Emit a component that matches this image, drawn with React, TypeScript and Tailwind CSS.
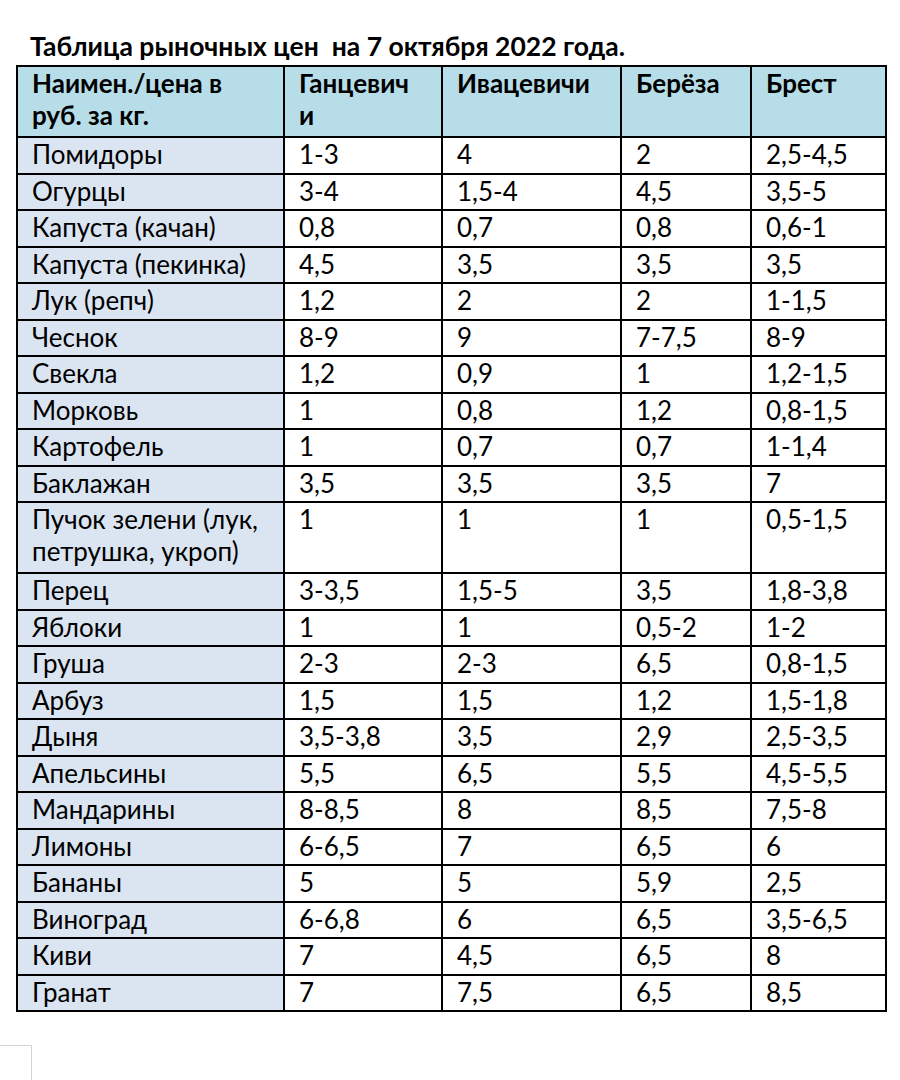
import { Fragment } from "react";

const rows: [string, string, string, string, string][] = [
  ["Помидоры", "1-3", "4", "2", "2,5-4,5"],
  ["Огурцы", "3-4", "1,5-4", "4,5", "3,5-5"],
  ["Капуста (качан)", "0,8", "0,7", "0,8", "0,6-1"],
  ["Капуста (пекинка)", "4,5", "3,5", "3,5", "3,5"],
  ["Лук (репч)", "1,2", "2", "2", "1-1,5"],
  ["Чеснок", "8-9", "9", "7-7,5", "8-9"],
  ["Свекла", "1,2", "0,9", "1", "1,2-1,5"],
  ["Морковь", "1", "0,8", "1,2", "0,8-1,5"],
  ["Картофель", "1", "0,7", "0,7", "1-1,4"],
  ["Баклажан", "3,5", "3,5", "3,5", "7"],
  ["Пучок зелени (лук,|петрушка, укроп)", "1", "1", "1", "0,5-1,5"],
  ["Перец", "3-3,5", "1,5-5", "3,5", "1,8-3,8"],
  ["Яблоки", "1", "1", "0,5-2", "1-2"],
  ["Груша", "2-3", "2-3", "6,5", "0,8-1,5"],
  ["Арбуз", "1,5", "1,5", "1,2", "1,5-1,8"],
  ["Дыня", "3,5-3,8", "3,5", "2,9", "2,5-3,5"],
  ["Апельсины", "5,5", "6,5", "5,5", "4,5-5,5"],
  ["Мандарины", "8-8,5", "8", "8,5", "7,5-8"],
  ["Лимоны", "6-6,5", "7", "6,5", "6"],
  ["Бананы", "5", "5", "5,9", "2,5"],
  ["Виноград", "6-6,8", "6", "6,5", "3,5-6,5"],
  ["Киви", "7", "4,5", "6,5", "8"],
  ["Гранат", "7", "7,5", "6,5", "8,5"],
];

const headers = ["Наимен./цена в|руб. за кг.", "Ганцевич|и", "Ивацевичи", "Берёза", "Брест"];

// "|" marks a forced line break, as in the original document
function Lines({ text }: { text: string }) {
  const parts = text.split("|");
  return (
    <>
      {parts.map((p, i) => (
        <Fragment key={i}>
          {i > 0 && <br />}
          {p}
        </Fragment>
      ))}
    </>
  );
}

export default function App() {
  return (
    <div className="relative w-[900px] h-[1080px] bg-white text-black font-['Lato',sans-serif] overflow-hidden">
      <div className="pt-[30px] pl-[30px]">
        <h1 className="text-[26.5px] leading-[32px] font-bold whitespace-pre">Таблица рыночных цен  на 7 октября 2022 года.</h1>
      </div>
      <table className="mt-[3px] ml-[16px] border-collapse border-2 border-black text-[26px] leading-[32px] whitespace-nowrap">
        <colgroup>
          <col className="w-[267px]" />
          <col className="w-[158px]" />
          <col className="w-[179px]" />
          <col className="w-[130px]" />
          <col className="w-[135px]" />
        </colgroup>
        <thead>
          <tr className="h-[71px] bg-[#b7dde8]">
            {headers.map((h) => (
              <th key={h} className="border-2 border-black px-[14px] py-0 align-top text-left font-bold">
                <Lines text={h} />
              </th>
            ))}
          </tr>
        </thead>
        <tbody>
          {rows.map((r) => (
            <tr key={r[0]} className={r[0].includes("|") ? "h-[71px]" : "h-[36.5px]"}>
              {r.map((c, i) => (
                <td
                  key={i}
                  className={
                    "border-2 border-black px-[14px] py-0 align-top " +
                    (i === 0 ? "bg-[#dbe5f1]" : "bg-white")
                  }
                >
                  <Lines text={c} />
                </td>
              ))}
            </tr>
          ))}
        </tbody>
      </table>
      <div className="absolute left-[-4px] top-[1045px] w-[36px] h-[60px] border border-[#d4d4d4]" />
    </div>
  );
}
